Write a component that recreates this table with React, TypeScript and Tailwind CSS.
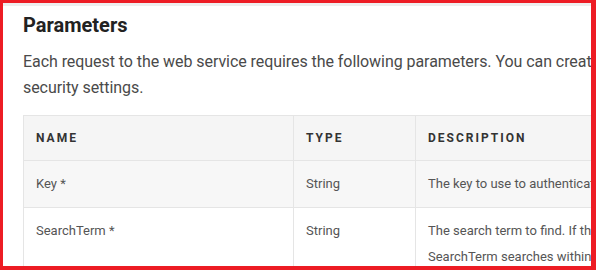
import React from "react";

export default function App() {
  return (
    <div
      className="w-[596px] h-[270px] overflow-hidden bg-white border-l-[3px] border-t-[3px] border-r-[5px] border-b-[4px] border-[#ed1c24]"
      style={{ fontFamily: "Roboto, 'Liberation Sans', sans-serif" }}
    >
      <div className="h-[3px] bg-[#eeeeee]" />
      <div className="pl-[20px] pt-[5px] w-[900px]">
        <h2 className="text-[20px] leading-[28px] font-bold text-[#222222]">Parameters</h2>
        <p className="mt-[10px] text-[16px] leading-[26px] tracking-[-0.06px] text-[#4a4a4a] whitespace-nowrap">
          Each request to the web service requires the following parameters. You can create keys in your
          <br />
          security settings.
        </p>
        <table className="mt-[14px] table-fixed border-collapse w-[800px] text-[13px] text-[#555555]">
          <colgroup>
            <col className="w-[270px]" />
            <col className="w-[122px]" />
            <col />
          </colgroup>
          <thead>
            <tr className="bg-[#f5f5f5] h-[45px]">
              <th className="border border-[#e5e5e5] px-[12px] text-left text-[12px] font-bold tracking-[2px] text-[#333333] align-middle">NAME</th>
              <th className="border border-[#e5e5e5] px-[12px] text-left text-[12px] font-bold tracking-[2px] text-[#333333] align-middle">TYPE</th>
              <th className="border border-[#e5e5e5] px-[12px] text-left text-[12px] font-bold tracking-[2px] text-[#333333] align-middle">DESCRIPTION</th>
            </tr>
          </thead>
          <tbody>
            <tr className="bg-[#f7f7f7]">
              <td className="border border-[#e5e5e5] px-[12px] py-[10px] leading-[26px] align-top">Key *</td>
              <td className="border border-[#e5e5e5] px-[12px] py-[10px] leading-[26px] align-top">String</td>
              <td className="border border-[#e5e5e5] px-[12px] py-[10px] leading-[26px] align-top">The key to use to authenticate the request.</td>
            </tr>
            <tr className="bg-white">
              <td className="border border-[#e5e5e5] px-[12px] py-[10px] leading-[26px] align-top">SearchTerm *</td>
              <td className="border border-[#e5e5e5] px-[12px] py-[10px] leading-[26px] align-top">String</td>
              <td className="border border-[#e5e5e5] px-[12px] py-[10px] leading-[26px] align-top">
                The search term to find. If the term is empty, nothing is returned.
                <br />
                SearchTerm searches within names and descriptions.
              </td>
            </tr>
          </tbody>
        </table>
      </div>
    </div>
  );
}
